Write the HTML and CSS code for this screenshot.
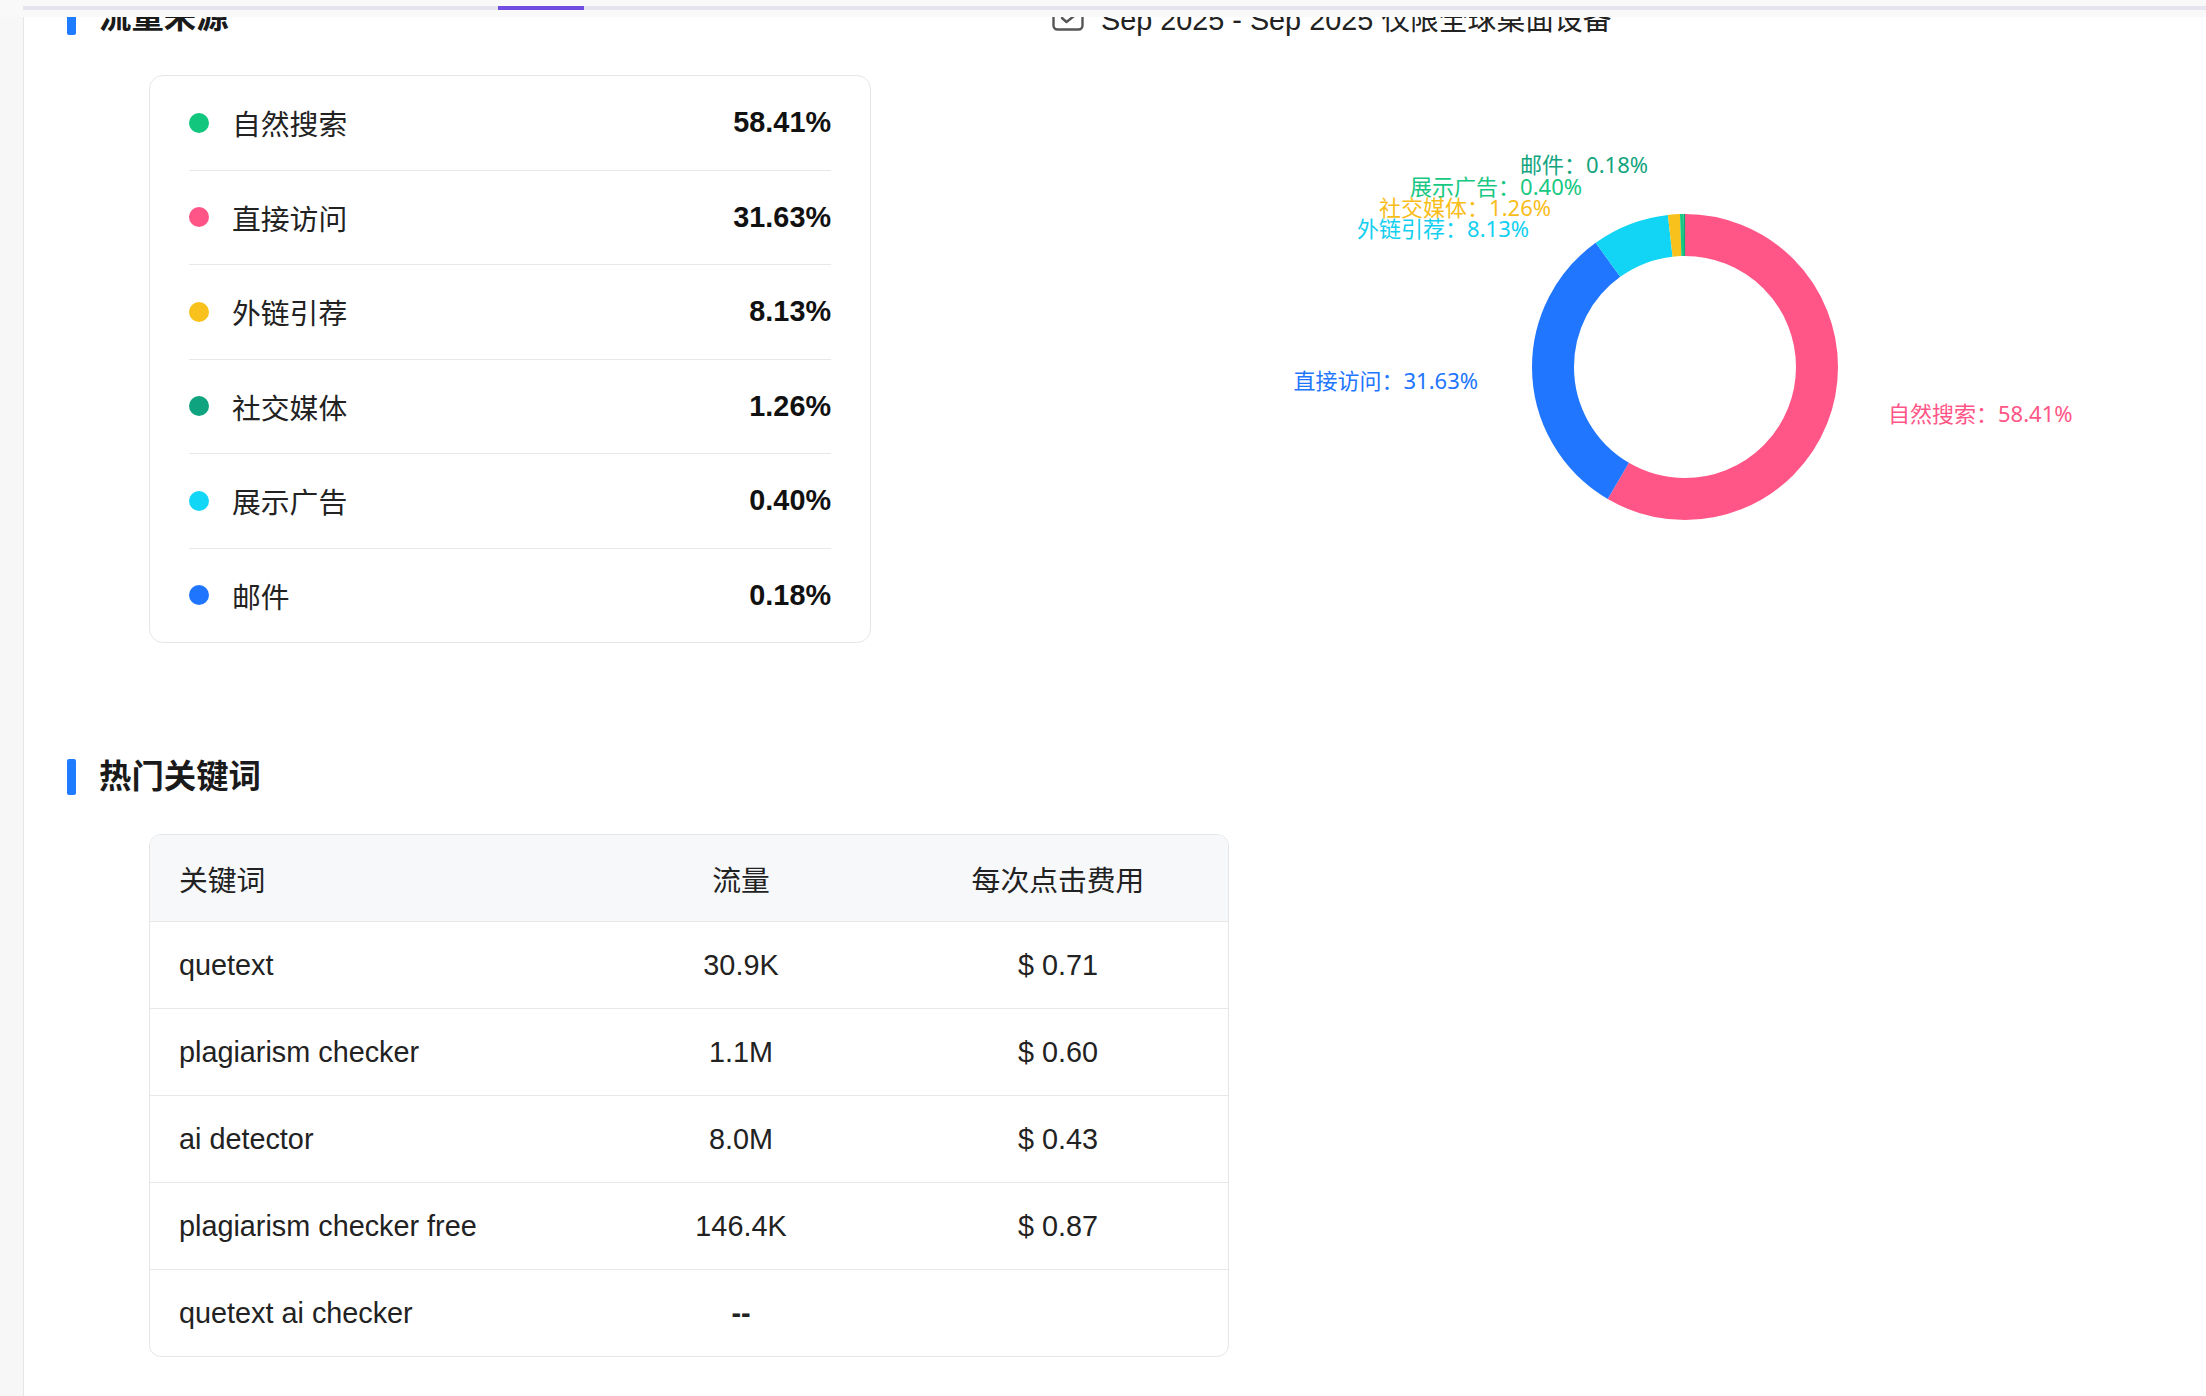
FILE: index.html
```html
<!DOCTYPE html>
<html lang="zh-CN">
<head>
<meta charset="utf-8">
<title>流量来源</title>
<link rel="stylesheet" href="styles.css">
</head>
<body>
<div class="topbar"><div class="tabline"><span class="tab-active"></span></div></div>
<div class="page">
  <aside class="sidebar"></aside>
  <main class="main">
    <section class="traffic">
      <div class="col-left">
        <h2 class="sec-title"><span class="bar"></span>流量来源</h2>
        <div class="src-card">
          <div class="src-row"><span class="dot dot-green"></span><span class="src-label">自然搜索</span><span class="src-val">58.41%</span></div>
          <div class="src-row"><span class="dot dot-pink"></span><span class="src-label">直接访问</span><span class="src-val">31.63%</span></div>
          <div class="src-row"><span class="dot dot-yellow"></span><span class="src-label">外链引荐</span><span class="src-val">8.13%</span></div>
          <div class="src-row"><span class="dot dot-teal"></span><span class="src-label">社交媒体</span><span class="src-val">1.26%</span></div>
          <div class="src-row"><span class="dot dot-cyan"></span><span class="src-label">展示广告</span><span class="src-val">0.40%</span></div>
          <div class="src-row"><span class="dot dot-blue"></span><span class="src-label">邮件</span><span class="src-val">0.18%</span></div>
        </div>
      </div>
      <div class="col-right">
        <div class="date-row">
          <svg class="chk" width="32" height="32" viewBox="0 0 32 32"><rect x="1.5" y="1.5" width="29" height="29" rx="4" fill="none" stroke="#555" stroke-width="2.4"/><path d="M10 19 L14.5 23 L22 17" fill="none" stroke="#555" stroke-width="2.4" stroke-linecap="round" stroke-linejoin="round"/></svg>
          <span class="date-text">Sep 2025 - Sep 2025 仅限全球桌面设备</span>
        </div>
        <svg class="donut" width="1100" height="560" viewBox="0 0 1100 560">
          <g transform="rotate(-90 633 332)" fill="none" stroke-width="42">
            <circle cx="633" cy="332" r="132" stroke="#ff5687" stroke-dasharray="484.45 344.93" stroke-dashoffset="0"/>
            <circle cx="633" cy="332" r="132" stroke="#2176ff" stroke-dasharray="262.34 567.04" stroke-dashoffset="-484.45"/>
            <circle cx="633" cy="332" r="132" stroke="#12d5f5" stroke-dasharray="67.43 761.95" stroke-dashoffset="-746.79"/>
            <circle cx="633" cy="332" r="132" stroke="#f9c11c" stroke-dasharray="10.45 818.93" stroke-dashoffset="-814.22"/>
            <circle cx="633" cy="332" r="132" stroke="#17c882" stroke-dasharray="3.32 826.06" stroke-dashoffset="-824.67"/>
            <circle cx="633" cy="332" r="132" stroke="#13a47e" stroke-dasharray="1.5 827.88" stroke-dashoffset="-827.99"/>
          </g>
          <g class="lbl">
            <text x="596" y="129" text-anchor="end" fill="#13a47e">邮件：0.18%</text>
            <text x="530" y="151" text-anchor="end" fill="#17c882">展示广告：0.40%</text>
            <text x="499" y="172" text-anchor="end" fill="#f9bd1a">社交媒体：1.26%</text>
            <text x="477" y="193" text-anchor="end" fill="#12cff0">外链引荐：8.13%</text>
            <text x="426" y="345" text-anchor="end" fill="#2176ff">直接访问：31.63%</text>
            <text x="836" y="378" text-anchor="start" fill="#ff5687">自然搜索：58.41%</text>
          </g>
        </svg>
      </div>
    </section>
    <section class="keywords">
      <h2 class="sec-title"><span class="bar"></span>热门关键词</h2>
      <div class="kw-table">
        <div class="kw-row kw-head"><span class="kw-c1">关键词</span><span class="kw-c">流量</span><span class="kw-c">每次点击费用</span></div>
        <div class="kw-row"><span class="kw-c1">quetext</span><span class="kw-c">30.9K</span><span class="kw-c">$ 0.71</span></div>
        <div class="kw-row"><span class="kw-c1">plagiarism checker</span><span class="kw-c">1.1M</span><span class="kw-c">$ 0.60</span></div>
        <div class="kw-row"><span class="kw-c1">ai detector</span><span class="kw-c">8.0M</span><span class="kw-c">$ 0.43</span></div>
        <div class="kw-row"><span class="kw-c1">plagiarism checker free</span><span class="kw-c">146.4K</span><span class="kw-c">$ 0.87</span></div>
        <div class="kw-row"><span class="kw-c1">quetext ai checker</span><span class="kw-c kw-dash">--</span><span class="kw-c"></span></div>
      </div>
    </section>
  </main>
</div>
</body>
</html>
```

FILE: styles.css
```css
html, body {
  margin: 0;
  padding: 0;
  background: #ffffff;
  overflow: hidden;
}
body {
  font-family: "Liberation Sans", "Noto Sans CJK SC", sans-serif;
  color: #1f1f1f;
}
.topbar {
  position: fixed;
  top: 0;
  left: 0;
  right: 0;
  height: 17px;
  background: #f9f9f9;
  z-index: 10;
}
.tabline {
  margin: 6px 0 0 23px;
  height: 4px;
  background: #e5e5ef;
}
.tab-active {
  display: block;
  margin-left: 475px;
  width: 86px;
  height: 4px;
  background: #714ce2;
}
.page {
  display: flex;
  min-height: 1396px;
}
.sidebar {
  flex: none;
  width: 23px;
  background: #f7f7f7;
  border-right: 1px solid #e6e6e6;
}
.main {
  flex: 1;
  padding-left: 43px;
  margin-top: -1px;
}
.traffic {
  display: flex;
  align-items: flex-start;
}
.col-left {
  flex: none;
  width: 804px;
}
.col-right {
  flex: none;
  margin-left: 181px;
}
.sec-title {
  margin: 0;
  height: 36px;
  display: flex;
  align-items: center;
  gap: 23px;
  font-size: 32.4px;
  line-height: 36px;
  font-weight: 700;
  color: #1a1a1a;
}
.bar {
  flex: none;
  width: 9px;
  height: 36px;
  border-radius: 2px;
  background: #1f7bff;
}
.src-card {
  margin: 40px 0 0 82px;
  width: 722px;
  box-sizing: border-box;
  border: 1px solid #e6e6e6;
  border-radius: 14px;
  padding: 0 39px;
}
.src-row {
  height: 93.5px;
  display: flex;
  align-items: center;
  border-bottom: 1px solid #e8e8e8;
  font-size: 28.8px;
}
.src-row:last-child {
  border-bottom: none;
}
.dot {
  flex: none;
  width: 20px;
  height: 20px;
  border-radius: 50%;
  margin-right: 23px;
}
.dot-green { background: #12c67e; }
.dot-pink { background: #ff5486; }
.dot-yellow { background: #f9c11b; }
.dot-teal { background: #10a37f; }
.dot-cyan { background: #12d6f5; }
.dot-blue { background: #1f75fe; }
.src-label {
  flex: 1;
  color: #222;
}
.src-val {
  font-weight: 700;
  color: #111;
}
.date-row {
  height: 36px;
  display: flex;
  align-items: center;
  gap: 17px;
  font-size: 28.8px;
  color: #222;
}
.chk {
  flex: none;
  margin-top: -4px;
}
.donut {
  display: block;
  overflow: visible;
}
.lbl text {
  font-family: "Noto Sans", "Noto Sans CJK SC", sans-serif;
  font-size: 22px;
  dominant-baseline: central;
}
.keywords {
  margin-top: 116px;
}
.kw-table {
  margin: 39px 0 0 82px;
  width: 1080px;
  box-sizing: border-box;
  border: 1px solid #e6e6e6;
  border-radius: 12px;
  overflow: hidden;
  font-size: 28.8px;
  color: #222;
}
.kw-row {
  display: grid;
  grid-template-columns: 444px 294px 1fr;
  align-items: center;
  height: 86px;
  border-bottom: 1px solid #e8e8e8;
}
.kw-row:last-child {
  border-bottom: none;
}
.kw-head {
  background: #f7f8fa;
}
.kw-c1 {
  padding-left: 29px;
}
.kw-c {
  text-align: center;
}
.kw-dash {
  font-weight: 700;
}
```
